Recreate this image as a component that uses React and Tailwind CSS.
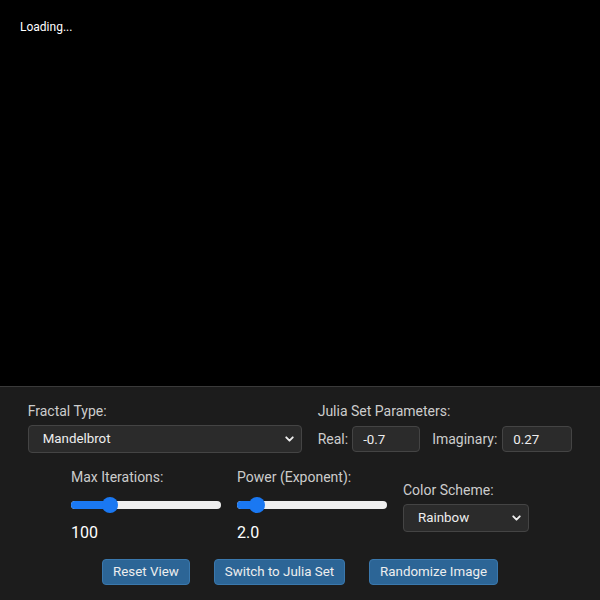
import { ChevronDown } from 'lucide-react'

const font = { fontFamily: 'Roboto, "Liberation Sans", sans-serif' }

function Select({ value, className }) {
  return (
    <div className={`relative ${className}`}>
      <select
        defaultValue={value}
        className="w-full h-full appearance-none rounded-[4px] border border-[#444] bg-[#2b2b2b] pl-[14px] pr-8 text-[13.33px] text-[#eee] outline-none"
      >
        <option>{value}</option>
      </select>
      <ChevronDown
        size={13}
        strokeWidth={3.5}
        className="pointer-events-none absolute right-[6px] top-1/2 -translate-y-1/2 text-[#eee]"
      />
    </div>
  )
}

function Slider({ label, value, pct }) {
  return (
    <div className="flex w-[150px] flex-col">
      <label className="h-5 text-[14px] leading-5 text-[#ccc]">{label}</label>
      <div className="relative mt-[10px] h-4 w-full">
        <div className="absolute left-0 right-0 top-1/2 h-[8px] -translate-y-1/2 rounded-full bg-[#efefef]" />
        <div
          className="absolute left-0 top-1/2 h-[8px] -translate-y-1/2 rounded-full bg-[#1a78f2]"
          style={{ width: `${pct}%` }}
        />
        <div
          className="absolute top-0 h-4 w-4 -translate-x-1/2 rounded-full bg-[#1a78f2]"
          style={{ left: `${pct}%` }}
        />
      </div>
      <span className="mt-[8px] h-6 text-[16px] leading-6 text-white">{value}</span>
    </div>
  )
}

function Button({ children }) {
  return (
    <button className="h-[26px] rounded-[4px] border border-[#3a78ad] bg-[#2c6596] px-[10px] text-[13.33px] text-[#eee]">
      {children}
    </button>
  )
}

export default function App() {
  return (
    <div className="flex h-[600px] w-[600px] flex-col bg-black" style={font}>
      {/* canvas */}
      <div className="h-[386px] px-5 pt-[19px] text-[12px] leading-4 text-white">Loading...</div>

      {/* controls */}
      <div className="flex flex-1 flex-col items-center gap-[14px] border-t border-[#3a3a3a] bg-[#1c1c1c] pt-[14px]">
        <div className="flex items-start gap-4">
          <div className="flex flex-col">
            <label className="h-5 text-[14px] leading-5 text-[#ccc]">Fractal Type:</label>
            <Select value="Mandelbrot" className="mt-1 h-[28px] w-[274px]" />
          </div>
          <div className="flex flex-col">
            <label className="h-5 text-[14px] leading-5 text-[#ccc]">Julia Set Parameters:</label>
            <div className="mt-[5px] flex items-center text-[14px] text-[#ccc]">
              <span>Real:</span>
              <input
                defaultValue="-0.7"
                className="ml-[4px] h-[26px] w-[68px] rounded-[4px] border border-[#444] bg-[#2b2b2b] px-[10px] text-[13.33px] text-[#eee] outline-none"
              />
              <span className="ml-3">Imaginary:</span>
              <input
                defaultValue="0.27"
                className="ml-[5px] h-[26px] w-[70px] rounded-[4px] border border-[#444] bg-[#2b2b2b] px-[10px] text-[13.33px] text-[#eee] outline-none"
              />
            </div>
          </div>
        </div>

        <div className="flex items-center gap-4">
          <Slider label="Max Iterations:" value="100" pct={26} />
          <Slider label="Power (Exponent):" value="2.0" pct={13} />
          <div className="flex flex-col">
            <label className="h-5 text-[14px] leading-5 text-[#ccc]">Color Scheme:</label>
            <Select value="Rainbow" className="mt-1 h-[28px] w-[126px]" />
          </div>
        </div>

        <div className="flex items-center gap-6">
          <Button>Reset View</Button>
          <Button>Switch to Julia Set</Button>
          <Button>Randomize Image</Button>
        </div>
      </div>
    </div>
  )
}
